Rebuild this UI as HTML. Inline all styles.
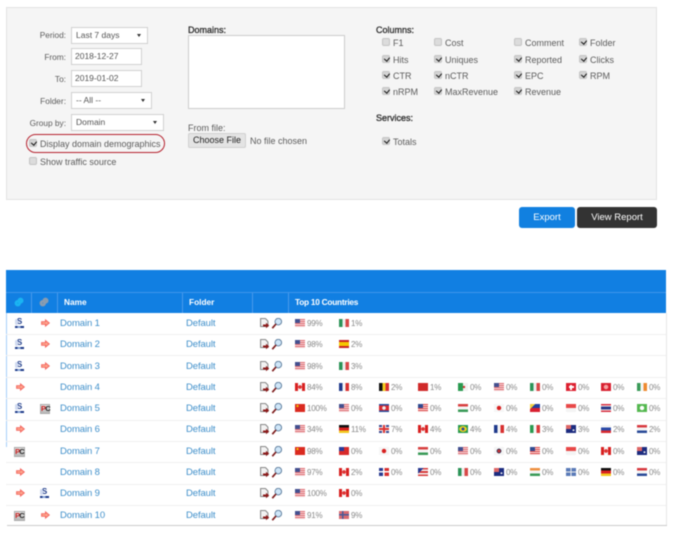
<!DOCTYPE html>
<html><head><meta charset="utf-8">
<style>
html,body{margin:0;padding:0;background:#fff}
#w{position:relative;width:700px;height:534px;overflow:hidden;font-family:"Liberation Sans",sans-serif;font-size:9px;color:#5c5c5c;filter:blur(.45px)}
#w div,#w span,#w b,#w svg{position:absolute;white-space:nowrap}
.l{line-height:12px;height:12px}
.r{text-align:right;width:60px;left:6px;font-size:8.3px}
.h{color:#333;font-size:9px;-webkit-text-stroke:.35px #333}
.in{background:#fff;border:1px solid #d0d0d0;box-sizing:border-box;line-height:15px;padding-left:4px;font-size:8.5px;color:#555}
.in em{position:absolute;right:6px;top:6px;width:0;height:0;border:2.5px solid transparent;border-top:3.5px solid #333;border-bottom:0}
.c{width:8px;height:7.5px;background:#dcdcdc;border:1px solid #c4c4c4;border-radius:2px;box-sizing:border-box}
.c.k{background:#d4d4d4}
.c.k:after{content:"";position:absolute;left:1.5px;top:-.5px;width:2.5px;height:4px;border:solid #111;border-width:0 1.6px 1.6px 0;transform:rotate(40deg)}
.hl{left:6px;height:1px;width:660px}
.v{top:293px;width:1px;height:20px;background:#4a9bea}
.th{top:296px;color:#fff;font-weight:bold;font-size:8.3px;line-height:12px}
.row{left:0;width:700px;height:21px}
.n{left:60px;top:1px;color:#3f8fca;line-height:14px;font-size:9.5px;letter-spacing:-.1px}
.d{left:186px;top:1px;color:#3f8fca;line-height:14px;font-size:9.5px;letter-spacing:-.1px}
.f{top:1px;height:13px;line-height:14px;padding-left:12px;font-size:8px;color:#888;letter-spacing:-.2px}
.f:before{content:"";position:absolute;left:0;top:2px;width:10px;height:8px;background-size:100% 100%}
.f1{left:295px}.f2{left:339px}.f3{left:379px}.f4{left:418px}.f5{left:458px}.f6{left:494px}.f7{left:530px}.f8{left:566px}.f9{left:601px}.f10{left:637px}
.us:before{background:linear-gradient(#44508f,#44508f) 0 0/5px 4px no-repeat,repeating-linear-gradient(#e06a70 0 1px,#f4d8da 1px 2px)}
.mx:before{background:linear-gradient(90deg,#2c9458 0 33%,#eee 33% 66%,#d84848 66%)}
.es:before{background:linear-gradient(#cc2222 0 25%,#f5c800 25% 75%,#cc2222 75%)}
.ca:before{background:radial-gradient(circle at 50% 50%,#d33 0 1.7px,transparent 2px),linear-gradient(90deg,#d82020 0 28%,#f8f8f8 28% 72%,#d82020 72%)}
.fr:before{background:linear-gradient(90deg,#1f3a8c 0 33%,#f5f5f5 33% 66%,#d83030 66%)}
.be:before{background:linear-gradient(90deg,#111 0 33%,#f2cc20 33% 66%,#d83030 66%)}
.rd:before{background:#d02a2a}
.dz:before{background:radial-gradient(circle at 60% 50%,#c33 0 1px,transparent 1.4px),linear-gradient(90deg,#2a9a50 50%,#f2f2f2 50%)}
.ch:before{background:linear-gradient(#fff,#fff) 50% 50%/2px 5px no-repeat,linear-gradient(#fff,#fff) 50% 50%/5px 2px no-repeat,#dc2030}
.hk:before{background:radial-gradient(circle,#f6a0a0 0 2px,transparent 2.5px),#d82030}
.ie:before{background:linear-gradient(90deg,#3a9a58 0 33%,#f4f4f4 33% 66%,#ee8a30 66%)}
.cn:before{background:radial-gradient(circle at 25% 25%,#f5c800 0 1px,transparent 1.3px),#da2a20}
.kh:before{background:radial-gradient(circle,#eee 0 1.6px,transparent 2px),linear-gradient(#2a4a9a 0 20%,#d82a30 20% 80%,#2a4a9a 80%)}
.my:before{background:linear-gradient(#304a90,#304a90) 0 0/5px 4px no-repeat,repeating-linear-gradient(#d44 0 1px,#f8e0e0 1px 2px)}
.hu:before{background:linear-gradient(#d84040 0 33%,#f6f6f6 33% 66%,#3a9a58 66%)}
.jp:before{background:radial-gradient(circle,#d82020 0 2px,transparent 2.4px),#f6f6f6}
.ph:before{background:linear-gradient(135deg,#f2d040 0 30%,transparent 30%),linear-gradient(#2040a0 50%,#d82030 50%)}
.sg:before{background:linear-gradient(#e84848 50%,#f4f4f4 50%)}
.th_:before{background:linear-gradient(#d83040 0 16%,#f4f4f4 16% 33%,#2a3a88 33% 66%,#f4f4f4 66% 83%,#d83040 83%)}
.gr:before{background:radial-gradient(circle,#fff 0 2px,transparent 2.4px),#55b850}
.de:before{background:linear-gradient(#111 0 33%,#d82020 33% 66%,#f2c820 66%)}
.gb:before{background:linear-gradient(#d33,#d33) 50% 50%/2px 100% no-repeat,linear-gradient(#d33,#d33) 50% 50%/100% 2px no-repeat,linear-gradient(#eee,#eee) 50% 50%/4px 100% no-repeat,linear-gradient(#eee,#eee) 50% 50%/100% 4px no-repeat,#3a4a90}
.br:before{background:radial-gradient(circle,#2a4a9a 0 1.4px,transparent 1.7px),radial-gradient(ellipse 4px 3px,#f2d020 0 90%,transparent 100%),#2a9a50}
.it:before{background:linear-gradient(90deg,#2a9a50 0 33%,#f4f4f4 33% 66%,#d83a3a 66%)}
.au:before{background:radial-gradient(circle at 75% 65%,#eee 0 .8px,transparent 1.1px),linear-gradient(#d66,#d66) 0 0/5px 4px no-repeat,#1c2c80}
.ru:before{background:linear-gradient(#f4f4f4 0 33%,#2a4aa8 33% 66%,#d82a30 66%)}
.nl:before{background:linear-gradient(#d83a40 0 33%,#f4f4f4 33% 66%,#2a4a98 66%)}
.tw:before{background:linear-gradient(#2a3a98,#2a3a98) 0 0/5px 4px no-repeat,#d82a2a}
.kr:before{background:radial-gradient(circle,#c33 0 1.4px,#335 1.5px 2.2px,transparent 2.5px),#f4f4f4}
.do:before{background:linear-gradient(#fff,#fff) 50% 50%/100% 1.5px no-repeat,linear-gradient(#fff,#fff) 50% 50%/1.5px 100% no-repeat,linear-gradient(90deg,#2a3a90 50%,#d83030 50%)}
.pr:before{background:linear-gradient(135deg,#2a3a90 0 32%,transparent 32%),repeating-linear-gradient(#d83a3a 0 1.6px,#f4f4f4 1.6px 3.2px)}
.in_:before{background:linear-gradient(#ee9040 0 33%,#f4f4f4 33% 66%,#3a9a58 66%)}
.bl:before{background:linear-gradient(90deg,transparent 45%,#eee 45% 55%,transparent 55%),linear-gradient(transparent 45%,#eee 45% 55%,transparent 55%),#5a7ab8}
.no:before{background:linear-gradient(#4a5a98,#4a5a98) 35% 50%/1.5px 100% no-repeat,linear-gradient(#4a5a98,#4a5a98) 50% 50%/100% 1.5px no-repeat,#d86a70}
.pc{width:10px;height:10px;top:3px;left:40px;background:linear-gradient(#e4e4e4,#b8b8b8);border:1px solid #aaa;box-sizing:border-box;font:bold 7.5px/8px "Liberation Sans",sans-serif;color:#c22;text-align:center;letter-spacing:-.8px}
.pc.p1{left:14px;width:11px}
.pc u{text-decoration:none;color:#222}
.s{width:9px;height:10px;top:2px;left:15px;font:bold 8px/7px "Liberation Sans",sans-serif;color:#1c3a88;text-align:center}
.s.s2{left:40px}
.s:before{content:"";position:absolute;left:0;bottom:0;width:9px;height:2.5px;background:linear-gradient(90deg,#1c3a88 0 30%,#8aa6d8 30% 60%,#1c3a88 60%)}
.s:after{content:"";position:absolute;left:0;top:1px;width:2.5px;height:6px;background:#d0daf0;border-radius:2px}
svg.a1{left:16px;top:3px}
svg.a2{left:41px;top:3px}
svg.x{left:260px;top:2px}
</style></head><body>
<div id="w">
<svg width="0" height="0"><defs>
<symbol id="ar" viewBox="0 0 9 8"><path d="M.6 2.700h3.900V.9L8.300 4 4.500 7.100V5.300H.6z" fill="#fca48c" stroke="#f4605a" stroke-width=".9"/></symbol>
<symbol id="ex" viewBox="0 0 22 11"><path d="M.6.600h4.900l2.400 2.400V8.600H.6z" fill="#f2f2f2" stroke="#777" stroke-width=".9"/><path d="M3 6.500h3V4.800l3.200 2.700L6 10.200V8.500H3z" fill="#8c1a1a"/><circle cx="18.300" cy="3.600" r="3.300" fill="#cfe6f8" stroke="#5a7a9a" stroke-width=".9"/><path d="M16 6 12.300 10.200" stroke="#7c1a1a" stroke-width="1.700"/></symbol>
<symbol id="ge" viewBox="0 0 10 10"><circle cx="3.800" cy="6.200" r="1.800" fill="none" stroke="currentColor" stroke-width="2.800"/><circle cx="6.500" cy="3.600" r="1.600" fill="none" stroke="currentColor" stroke-width="2.800"/></symbol>
</defs></svg>

<div style="left:6px;top:7px;width:651px;height:193px;background:#f5f5f5;border:1px solid #e3e3e3;box-sizing:border-box"></div>

<span class="l r" style="top:29px">Period:</span>
<span class="l r" style="top:51px">From:</span>
<span class="l r" style="top:73px">To:</span>
<span class="l r" style="top:95px">Folder:</span>
<span class="l r" style="top:117px">Group by:</span>
<div class="in" style="left:71px;top:27px;width:77px;height:17px">Last 7 days<em></em></div>
<div class="in" style="left:71px;top:48px;width:71px;height:17px;padding-left:3px">2018-12-27</div>
<div class="in" style="left:71px;top:70px;width:71px;height:17px;padding-left:3px">2019-01-02</div>
<div class="in" style="left:71px;top:92px;width:81px;height:17px">-- All --<em></em></div>
<div class="in" style="left:71px;top:114px;width:93px;height:17px">Domain<em></em></div>
<div style="left:26px;top:134px;width:139px;height:19px;border:1px solid #b5222e;border-radius:10px;box-sizing:border-box"></div>
<span class="c k" style="left:29px;top:139px"></span><span class="l" style="left:40px;top:138px">Display domain demographics</span>
<span class="c" style="left:28.500px;top:157px"></span><span class="l" style="left:40px;top:156px">Show traffic source</span>

<span class="l h" style="left:188px;top:24px">Domains:</span>
<div style="left:188px;top:35px;width:157px;height:74px;background:#fff;border:1px solid #ccc;box-sizing:border-box"></div>
<span class="l" style="left:188px;top:122px">From file:</span>
<div style="left:188px;top:133px;width:58px;height:15px;background:#e4e4e4;border:1px solid #d0d0d0;box-sizing:border-box;border-radius:2px;text-align:center;line-height:13px;color:#222;font-size:9px">Choose File</div>
<span class="l" style="left:250px;top:135px">No file chosen</span>

<span class="l h" style="left:376px;top:24px">Columns:</span>
<span class="c" style="left:382px;top:38px"></span><span class="l" style="left:393px;top:37px">F1</span>
<span class="c" style="left:434px;top:38px"></span><span class="l" style="left:445px;top:37px">Cost</span>
<span class="c" style="left:514px;top:38px"></span><span class="l" style="left:525px;top:37px">Comment</span>
<span class="c k" style="left:579px;top:38px"></span><span class="l" style="left:590px;top:37px">Folder</span>
<span class="c k" style="left:382px;top:55px"></span><span class="l" style="left:393px;top:54px">Hits</span>
<span class="c k" style="left:434px;top:55px"></span><span class="l" style="left:445px;top:54px">Uniques</span>
<span class="c k" style="left:514px;top:55px"></span><span class="l" style="left:525px;top:54px">Reported</span>
<span class="c k" style="left:579px;top:55px"></span><span class="l" style="left:590px;top:54px">Clicks</span>
<span class="c k" style="left:382px;top:71px"></span><span class="l" style="left:393px;top:70px">CTR</span>
<span class="c k" style="left:434px;top:71px"></span><span class="l" style="left:445px;top:70px">nCTR</span>
<span class="c k" style="left:514px;top:71px"></span><span class="l" style="left:525px;top:70px">EPC</span>
<span class="c k" style="left:579px;top:71px"></span><span class="l" style="left:590px;top:70px">RPM</span>
<span class="c k" style="left:382px;top:87px"></span><span class="l" style="left:393px;top:86px">nRPM</span>
<span class="c k" style="left:434px;top:87px"></span><span class="l" style="left:445px;top:86px">MaxRevenue</span>
<span class="c k" style="left:514px;top:87px"></span><span class="l" style="left:525px;top:86px">Revenue</span>
<span class="l h" style="left:376px;top:112px">Services:</span>
<span class="c k" style="left:382px;top:137px"></span><span class="l" style="left:393px;top:136px">Totals</span>

<div style="left:519px;top:207px;width:56px;height:21px;background:#1180e0;border-radius:3px;color:#fff;text-align:center;line-height:22px;font-size:9.500px">Export</div>
<div style="left:577px;top:207px;width:80px;height:21px;background:#333;border-radius:3px;color:#fff;text-align:center;line-height:22px;font-size:9.500px">View Report</div>

<div style="left:6px;top:270px;width:660px;height:43px;background:#117fe2"></div>
<div class="hl" style="top:292px;background:#3f95ea"></div>
<div class="v" style="left:31px"></div><div class="v" style="left:57px"></div><div class="v" style="left:182px"></div><div class="v" style="left:252px"></div><div class="v" style="left:288px"></div>
<svg style="left:14px;top:297px;color:#1ab4f2" width="10" height="10"><use href="#ge"/></svg>
<svg style="left:39px;top:297px;color:#8a9cb0" width="10" height="10"><use href="#ge"/></svg>
<span class="th" style="left:64px">Name</span><span class="th" style="left:189px">Folder</span><span class="th" style="left:295px;letter-spacing:-.25px">Top 10 Countries</span>

<div style="left:6px;top:313px;width:1px;height:134px;background:#a6d0fa"></div>
<div style="left:666px;top:313px;width:1px;height:212px;background:#e8e8e8"></div>
<div style="left:7px;top:525px;width:660px;height:1px;background:#ccc"></div>
<div class="hl" style="top:334px;background:#f0f0f0"></div><div class="hl" style="top:355px;background:#f0f0f0"></div><div class="hl" style="top:377px;background:#f0f0f0"></div><div class="hl" style="top:398px;background:#f0f0f0"></div><div class="hl" style="top:420px;background:#f0f0f0"></div><div class="hl" style="top:441px;background:#f0f0f0"></div><div class="hl" style="top:462px;background:#f0f0f0"></div><div class="hl" style="top:484px;background:#f0f0f0"></div><div class="hl" style="top:505px;background:#f0f0f0"></div>

<div class="row" style="top:316px"><span class="s">S</span><svg class="a2" width="9" height="8"><use href="#ar"/></svg><span class="n">Domain 1</span><span class="d">Default</span><svg class="x" width="22" height="11"><use href="#ex"/></svg><span class="f f1 us">99%</span><span class="f f2 mx">1%</span></div>

<div class="row" style="top:337px"><span class="s">S</span><svg class="a2" width="9" height="8"><use href="#ar"/></svg><span class="n">Domain 2</span><span class="d">Default</span><svg class="x" width="22" height="11"><use href="#ex"/></svg><span class="f f1 us">98%</span><span class="f f2 es">2%</span></div>

<div class="row" style="top:359px"><span class="s">S</span><svg class="a2" width="9" height="8"><use href="#ar"/></svg><span class="n">Domain 3</span><span class="d">Default</span><svg class="x" width="22" height="11"><use href="#ex"/></svg><span class="f f1 us">98%</span><span class="f f2 mx">3%</span></div>

<div class="row" style="top:380px"><svg class="a1" width="9" height="8"><use href="#ar"/></svg><span class="n">Domain 4</span><span class="d">Default</span><svg class="x" width="22" height="11"><use href="#ex"/></svg><span class="f f1 ca">84%</span><span class="f f2 fr">8%</span><span class="f f3 be">2%</span><span class="f f4 rd">1%</span><span class="f f5 dz">0%</span><span class="f f6 us">0%</span><span class="f f7 mx">0%</span><span class="f f8 ch">0%</span><span class="f f9 hk">0%</span><span class="f f10 ie">0%</span></div>

<div class="row" style="top:401px"><span class="s">S</span><span class="pc">P<u>C</u></span><span class="n">Domain 5</span><span class="d">Default</span><svg class="x" width="22" height="11"><use href="#ex"/></svg><span class="f f1 cn">100%</span><span class="f f2 us">0%</span><span class="f f3 kh">0%</span><span class="f f4 my">0%</span><span class="f f5 hu">0%</span><span class="f f6 jp">0%</span><span class="f f7 ph">0%</span><span class="f f8 sg">0%</span><span class="f f9 th_">0%</span><span class="f f10 gr">0%</span></div>

<div class="row" style="top:422px"><svg class="a1" width="9" height="8"><use href="#ar"/></svg><span class="n">Domain 6</span><span class="d">Default</span><svg class="x" width="22" height="11"><use href="#ex"/></svg><span class="f f1 us">34%</span><span class="f f2 de">11%</span><span class="f f3 gb">7%</span><span class="f f4 ca">4%</span><span class="f f5 br">4%</span><span class="f f6 fr">4%</span><span class="f f7 it">3%</span><span class="f f8 au">3%</span><span class="f f9 ru">2%</span><span class="f f10 nl">2%</span></div>

<div class="row" style="top:444px"><span class="pc p1" style="top:3px">P<u>C</u></span><span class="n">Domain 7</span><span class="d">Default</span><svg class="x" width="22" height="11"><use href="#ex"/></svg><span class="f f1 cn">98%</span><span class="f f2 tw">0%</span><span class="f f3 jp">0%</span><span class="f f4 hu">0%</span><span class="f f5 us">0%</span><span class="f f6 kr">0%</span><span class="f f7 my">0%</span><span class="f f8 sg">0%</span><span class="f f9 ca">0%</span><span class="f f10 au">0%</span></div>

<div class="row" style="top:465px"><svg class="a1" width="9" height="8"><use href="#ar"/></svg><span class="n">Domain 8</span><span class="d">Default</span><svg class="x" width="22" height="11"><use href="#ex"/></svg><span class="f f1 us">97%</span><span class="f f2 ca">2%</span><span class="f f3 do">0%</span><span class="f f4 pr">0%</span><span class="f f5 mx">0%</span><span class="f f6 au">0%</span><span class="f f7 in_">0%</span><span class="f f8 bl">0%</span><span class="f f9 de">0%</span><span class="f f10 nl">0%</span></div>

<div class="row" style="top:486px"><svg class="a1" width="9" height="8"><use href="#ar"/></svg><span class="s s2">S</span><span class="n">Domain 9</span><span class="d">Default</span><svg class="x" width="22" height="11"><use href="#ex"/></svg><span class="f f1 us">100%</span><span class="f f2 ca">0%</span></div>

<div class="row" style="top:508px"><span class="pc p1" style="top:3px">P<u>C</u></span><svg class="a2" width="9" height="8"><use href="#ar"/></svg><span class="n">Domain 10</span><span class="d">Default</span><svg class="x" width="22" height="11"><use href="#ex"/></svg><span class="f f1 us">91%</span><span class="f f2 no">9%</span></div>
</div>
</body></html>
